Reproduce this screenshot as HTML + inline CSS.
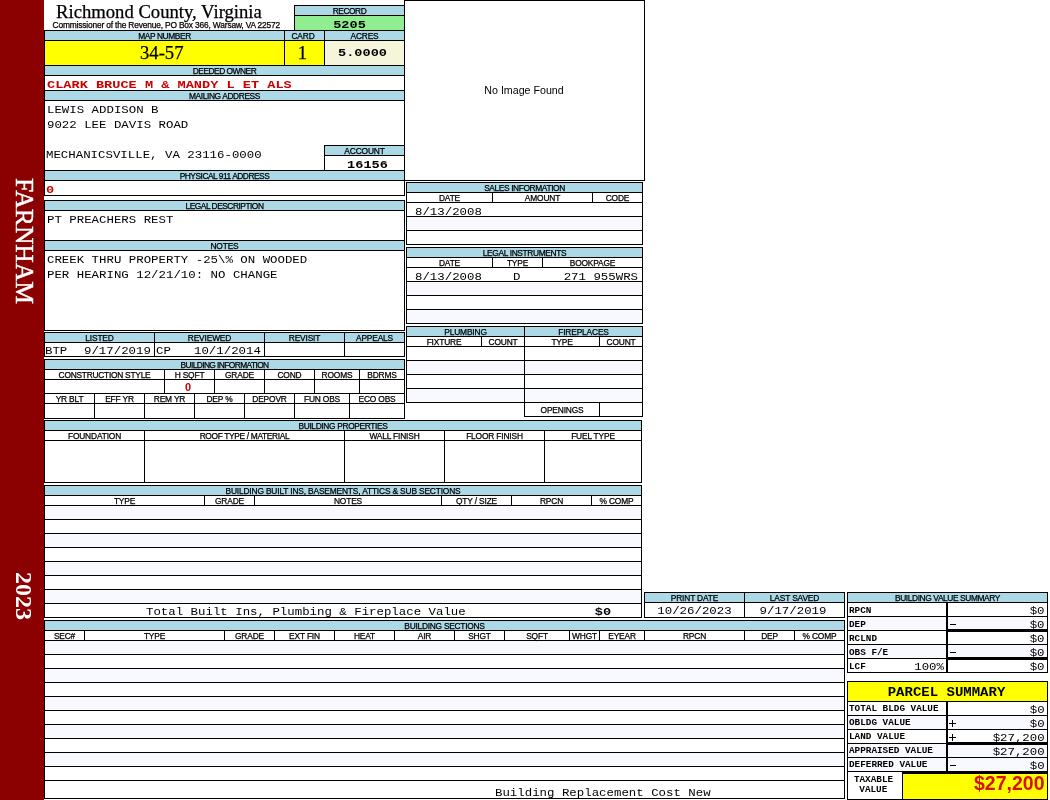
<!DOCTYPE html>
<html><head><meta charset="utf-8"><title>Property Record Card</title>
<style>
html,body{margin:0;padding:0;background:#fff;}
#p{position:relative;width:1050px;height:800px;overflow:hidden;background:#fff;font-family:"Liberation Sans",sans-serif;will-change:transform;}
.r{position:absolute;}
.t{position:absolute;white-space:pre;color:#000;line-height:1;}
.h{font:8.4px/9px "Liberation Sans",sans-serif;letter-spacing:-0.16px;-webkit-text-stroke:0.25px #000;}
.hs{letter-spacing:-0.165px;}
.m{font:12.4px/14px "Liberation Mono",monospace;transform:scaleY(.86);transform-origin:0 0;}
.mb{font:bold 13.6px/14px "Liberation Mono",monospace;transform:scaleY(.86);transform-origin:0 0;}
.sb{font:bold 11px/13px "Liberation Sans",sans-serif;}
.lb{font:bold 9.33px/12px "Liberation Mono",monospace;}
.s10{font:10.67px/14px "Liberation Sans",sans-serif;}
.title{font:18.67px/20px "Liberation Serif",serif;-webkit-text-stroke:0.25px #000;}
.big{font:18.67px/22px "Liberation Serif",serif;-webkit-text-stroke:0.25px #000;}
.ps{font:bold 14px/17px "Liberation Mono",monospace;transform:scaleY(.86);transform-origin:0 0;}
.tax{font:bold 19.5px/24px "Liberation Sans",sans-serif;}
.side{color:#fff;}
.rot{position:absolute;left:0;top:0;transform-origin:0 0;white-space:pre;font-family:"Liberation Serif",serif;}
.rot.f{font-size:25.6px;line-height:44px;-webkit-text-stroke:0.45px #fff;transform:translate(45.5px,0) rotate(90deg);}
.rot.y{font-size:24px;font-weight:bold;line-height:44px;transform:translate(46px,0) rotate(90deg);}
</style></head>
<body><div id="p">
<div class="r" style="left:0px;top:0px;width:44px;height:800px;background:#8B0000"></div>
<div class="r" style="left:295px;top:6px;width:109px;height:9px;background:#ADD8E6"></div>
<div class="r" style="left:295px;top:16px;width:109px;height:14px;background:#90EE90"></div>
<div class="r" style="left:294px;top:5px;width:111px;height:1px;background:#000"></div>
<div class="r" style="left:294px;top:15px;width:111px;height:1px;background:#000"></div>
<div class="r" style="left:294px;top:5px;width:1px;height:26px;background:#000"></div>
<div class="r" style="left:45px;top:31px;width:359px;height:9px;background:#ADD8E6"></div>
<div class="r" style="left:45px;top:41px;width:239px;height:24px;background:#FFFF00"></div>
<div class="r" style="left:285px;top:41px;width:39px;height:24px;background:#FFFF00"></div>
<div class="r" style="left:325px;top:41px;width:79px;height:24px;background:#F5F5DC"></div>
<div class="r" style="left:44px;top:30px;width:361px;height:1px;background:#000"></div>
<div class="r" style="left:44px;top:40px;width:361px;height:1px;background:#000"></div>
<div class="r" style="left:44px;top:65px;width:361px;height:1px;background:#000"></div>
<div class="r" style="left:284px;top:30px;width:1px;height:36px;background:#000"></div>
<div class="r" style="left:324px;top:30px;width:1px;height:36px;background:#000"></div>
<div class="r" style="left:45px;top:66px;width:359px;height:9px;background:#ADD8E6"></div>
<div class="r" style="left:44px;top:75px;width:361px;height:1px;background:#000"></div>
<div class="r" style="left:44px;top:90px;width:361px;height:1px;background:#000"></div>
<div class="r" style="left:45px;top:91px;width:359px;height:9px;background:#ADD8E6"></div>
<div class="r" style="left:44px;top:100px;width:361px;height:1px;background:#000"></div>
<div class="r" style="left:325px;top:146px;width:79px;height:9px;background:#ADD8E6"></div>
<div class="r" style="left:324px;top:145px;width:81px;height:1px;background:#000"></div>
<div class="r" style="left:324px;top:155px;width:81px;height:1px;background:#000"></div>
<div class="r" style="left:324px;top:145px;width:1px;height:26px;background:#000"></div>
<div class="r" style="left:44px;top:170px;width:361px;height:1px;background:#000"></div>
<div class="r" style="left:45px;top:171px;width:359px;height:9px;background:#ADD8E6"></div>
<div class="r" style="left:44px;top:180px;width:361px;height:1px;background:#000"></div>
<div class="r" style="left:44px;top:195px;width:361px;height:1px;background:#000"></div>
<div class="r" style="left:44px;top:200px;width:361px;height:1px;background:#000"></div>
<div class="r" style="left:45px;top:201px;width:359px;height:9px;background:#ADD8E6"></div>
<div class="r" style="left:44px;top:210px;width:361px;height:1px;background:#000"></div>
<div class="r" style="left:44px;top:240px;width:361px;height:1px;background:#000"></div>
<div class="r" style="left:45px;top:241px;width:359px;height:9px;background:#ADD8E6"></div>
<div class="r" style="left:44px;top:250px;width:361px;height:1px;background:#000"></div>
<div class="r" style="left:44px;top:330px;width:361px;height:1px;background:#000"></div>
<div class="r" style="left:44px;top:332px;width:361px;height:1px;background:#000"></div>
<div class="r" style="left:45px;top:333px;width:359px;height:9px;background:#ADD8E6"></div>
<div class="r" style="left:44px;top:342px;width:361px;height:1px;background:#000"></div>
<div class="r" style="left:44px;top:356px;width:361px;height:1px;background:#000"></div>
<div class="r" style="left:154px;top:332px;width:1px;height:25px;background:#000"></div>
<div class="r" style="left:264px;top:332px;width:1px;height:25px;background:#000"></div>
<div class="r" style="left:344px;top:332px;width:1px;height:25px;background:#000"></div>
<div class="r" style="left:44px;top:359px;width:361px;height:1px;background:#000"></div>
<div class="r" style="left:45px;top:360px;width:359px;height:9px;background:#ADD8E6"></div>
<div class="r" style="left:44px;top:369px;width:361px;height:1px;background:#000"></div>
<div class="r" style="left:44px;top:379px;width:361px;height:1px;background:#000"></div>
<div class="r" style="left:44px;top:393px;width:361px;height:1px;background:#000"></div>
<div class="r" style="left:44px;top:403px;width:361px;height:1px;background:#000"></div>
<div class="r" style="left:44px;top:418px;width:361px;height:1px;background:#000"></div>
<div class="r" style="left:164px;top:369px;width:1px;height:25px;background:#000"></div>
<div class="r" style="left:214px;top:369px;width:1px;height:25px;background:#000"></div>
<div class="r" style="left:264px;top:369px;width:1px;height:25px;background:#000"></div>
<div class="r" style="left:314px;top:369px;width:1px;height:25px;background:#000"></div>
<div class="r" style="left:359px;top:369px;width:1px;height:25px;background:#000"></div>
<div class="r" style="left:94px;top:393px;width:1px;height:26px;background:#000"></div>
<div class="r" style="left:144px;top:393px;width:1px;height:26px;background:#000"></div>
<div class="r" style="left:194px;top:393px;width:1px;height:26px;background:#000"></div>
<div class="r" style="left:244px;top:393px;width:1px;height:26px;background:#000"></div>
<div class="r" style="left:294px;top:393px;width:1px;height:26px;background:#000"></div>
<div class="r" style="left:349px;top:393px;width:1px;height:26px;background:#000"></div>
<div class="r" style="left:44px;top:30px;width:1px;height:166px;background:#000"></div>
<div class="r" style="left:404px;top:30px;width:1px;height:166px;background:#000"></div>
<div class="r" style="left:44px;top:200px;width:1px;height:131px;background:#000"></div>
<div class="r" style="left:404px;top:200px;width:1px;height:131px;background:#000"></div>
<div class="r" style="left:44px;top:332px;width:1px;height:25px;background:#000"></div>
<div class="r" style="left:404px;top:332px;width:1px;height:25px;background:#000"></div>
<div class="r" style="left:44px;top:359px;width:1px;height:60px;background:#000"></div>
<div class="r" style="left:404px;top:359px;width:1px;height:60px;background:#000"></div>
<div class="r" style="left:404px;top:0px;width:1px;height:31px;background:#000"></div>
<div class="r" style="left:404px;top:0px;width:241px;height:1px;background:#000"></div>
<div class="r" style="left:404px;top:180px;width:241px;height:1px;background:#000"></div>
<div class="r" style="left:644px;top:0px;width:1px;height:181px;background:#000"></div>
<div class="r" style="left:407px;top:183px;width:235px;height:9px;background:#ADD8E6"></div>
<div class="r" style="left:407px;top:217px;width:235px;height:13px;background:#F8F8FF"></div>
<div class="r" style="left:406px;top:182px;width:237px;height:1px;background:#000"></div>
<div class="r" style="left:406px;top:192px;width:237px;height:1px;background:#000"></div>
<div class="r" style="left:406px;top:202px;width:237px;height:1px;background:#000"></div>
<div class="r" style="left:406px;top:216px;width:237px;height:1px;background:#000"></div>
<div class="r" style="left:406px;top:230px;width:237px;height:1px;background:#000"></div>
<div class="r" style="left:406px;top:244px;width:237px;height:1px;background:#000"></div>
<div class="r" style="left:406px;top:182px;width:1px;height:63px;background:#000"></div>
<div class="r" style="left:642px;top:182px;width:1px;height:63px;background:#000"></div>
<div class="r" style="left:492px;top:192px;width:1px;height:11px;background:#000"></div>
<div class="r" style="left:592px;top:192px;width:1px;height:11px;background:#000"></div>
<div class="r" style="left:407px;top:248px;width:235px;height:9px;background:#ADD8E6"></div>
<div class="r" style="left:407px;top:282px;width:235px;height:13px;background:#F8F8FF"></div>
<div class="r" style="left:407px;top:310px;width:235px;height:13px;background:#F8F8FF"></div>
<div class="r" style="left:406px;top:247px;width:237px;height:1px;background:#000"></div>
<div class="r" style="left:406px;top:257px;width:237px;height:1px;background:#000"></div>
<div class="r" style="left:406px;top:267px;width:237px;height:1px;background:#000"></div>
<div class="r" style="left:406px;top:281px;width:237px;height:1px;background:#000"></div>
<div class="r" style="left:406px;top:295px;width:237px;height:1px;background:#000"></div>
<div class="r" style="left:406px;top:309px;width:237px;height:1px;background:#000"></div>
<div class="r" style="left:406px;top:323px;width:237px;height:1px;background:#000"></div>
<div class="r" style="left:406px;top:247px;width:1px;height:77px;background:#000"></div>
<div class="r" style="left:642px;top:247px;width:1px;height:77px;background:#000"></div>
<div class="r" style="left:492px;top:257px;width:1px;height:11px;background:#000"></div>
<div class="r" style="left:542px;top:257px;width:1px;height:11px;background:#000"></div>
<div class="r" style="left:407px;top:327px;width:235px;height:9px;background:#ADD8E6"></div>
<div class="r" style="left:407px;top:361px;width:235px;height:13px;background:#F8F8FF"></div>
<div class="r" style="left:407px;top:389px;width:235px;height:13px;background:#F8F8FF"></div>
<div class="r" style="left:406px;top:326px;width:237px;height:1px;background:#000"></div>
<div class="r" style="left:406px;top:336px;width:237px;height:1px;background:#000"></div>
<div class="r" style="left:406px;top:346px;width:237px;height:1px;background:#000"></div>
<div class="r" style="left:406px;top:360px;width:237px;height:1px;background:#000"></div>
<div class="r" style="left:406px;top:374px;width:237px;height:1px;background:#000"></div>
<div class="r" style="left:406px;top:388px;width:237px;height:1px;background:#000"></div>
<div class="r" style="left:406px;top:402px;width:237px;height:1px;background:#000"></div>
<div class="r" style="left:406px;top:326px;width:1px;height:77px;background:#000"></div>
<div class="r" style="left:642px;top:326px;width:1px;height:77px;background:#000"></div>
<div class="r" style="left:481px;top:336px;width:1px;height:11px;background:#000"></div>
<div class="r" style="left:524px;top:326px;width:1px;height:91px;background:#000"></div>
<div class="r" style="left:599px;top:336px;width:1px;height:11px;background:#000"></div>
<div class="r" style="left:599px;top:402px;width:1px;height:15px;background:#000"></div>
<div class="r" style="left:524px;top:416px;width:119px;height:1px;background:#000"></div>
<div class="r" style="left:642px;top:402px;width:1px;height:15px;background:#000"></div>
<div class="r" style="left:44px;top:420px;width:598px;height:1px;background:#000"></div>
<div class="r" style="left:45px;top:421px;width:596px;height:9px;background:#ADD8E6"></div>
<div class="r" style="left:44px;top:430px;width:598px;height:1px;background:#000"></div>
<div class="r" style="left:44px;top:440px;width:598px;height:1px;background:#000"></div>
<div class="r" style="left:44px;top:482px;width:598px;height:1px;background:#000"></div>
<div class="r" style="left:144px;top:430px;width:1px;height:53px;background:#000"></div>
<div class="r" style="left:344px;top:430px;width:1px;height:53px;background:#000"></div>
<div class="r" style="left:444px;top:430px;width:1px;height:53px;background:#000"></div>
<div class="r" style="left:544px;top:430px;width:1px;height:53px;background:#000"></div>
<div class="r" style="left:44px;top:420px;width:1px;height:63px;background:#000"></div>
<div class="r" style="left:641px;top:420px;width:1px;height:63px;background:#000"></div>
<div class="r" style="left:45px;top:486px;width:596px;height:9px;background:#ADD8E6"></div>
<div class="r" style="left:45px;top:506px;width:596px;height:13px;background:#F8F8FF"></div>
<div class="r" style="left:45px;top:534px;width:596px;height:13px;background:#F8F8FF"></div>
<div class="r" style="left:45px;top:562px;width:596px;height:13px;background:#F8F8FF"></div>
<div class="r" style="left:45px;top:590px;width:596px;height:13px;background:#F8F8FF"></div>
<div class="r" style="left:44px;top:485px;width:598px;height:1px;background:#000"></div>
<div class="r" style="left:44px;top:495px;width:598px;height:1px;background:#000"></div>
<div class="r" style="left:44px;top:505px;width:598px;height:1px;background:#000"></div>
<div class="r" style="left:44px;top:519px;width:598px;height:1px;background:#000"></div>
<div class="r" style="left:44px;top:533px;width:598px;height:1px;background:#000"></div>
<div class="r" style="left:44px;top:547px;width:598px;height:1px;background:#000"></div>
<div class="r" style="left:44px;top:561px;width:598px;height:1px;background:#000"></div>
<div class="r" style="left:44px;top:575px;width:598px;height:1px;background:#000"></div>
<div class="r" style="left:44px;top:589px;width:598px;height:1px;background:#000"></div>
<div class="r" style="left:44px;top:603px;width:598px;height:1px;background:#000"></div>
<div class="r" style="left:44px;top:617px;width:598px;height:1px;background:#000"></div>
<div class="r" style="left:44px;top:485px;width:1px;height:133px;background:#000"></div>
<div class="r" style="left:641px;top:485px;width:1px;height:133px;background:#000"></div>
<div class="r" style="left:204px;top:495px;width:1px;height:11px;background:#000"></div>
<div class="r" style="left:254px;top:495px;width:1px;height:11px;background:#000"></div>
<div class="r" style="left:441px;top:495px;width:1px;height:11px;background:#000"></div>
<div class="r" style="left:511px;top:495px;width:1px;height:11px;background:#000"></div>
<div class="r" style="left:591px;top:495px;width:1px;height:11px;background:#000"></div>
<div class="r" style="left:645px;top:593px;width:199px;height:9px;background:#ADD8E6"></div>
<div class="r" style="left:644px;top:592px;width:201px;height:1px;background:#000"></div>
<div class="r" style="left:644px;top:602px;width:201px;height:1px;background:#000"></div>
<div class="r" style="left:644px;top:617px;width:201px;height:1px;background:#000"></div>
<div class="r" style="left:644px;top:592px;width:1px;height:26px;background:#000"></div>
<div class="r" style="left:744px;top:592px;width:1px;height:26px;background:#000"></div>
<div class="r" style="left:844px;top:592px;width:1px;height:26px;background:#000"></div>
<div class="r" style="left:45px;top:621px;width:799px;height:9px;background:#ADD8E6"></div>
<div class="r" style="left:45px;top:641px;width:799px;height:13px;background:#F8F8FF"></div>
<div class="r" style="left:45px;top:669px;width:799px;height:13px;background:#F8F8FF"></div>
<div class="r" style="left:45px;top:697px;width:799px;height:13px;background:#F8F8FF"></div>
<div class="r" style="left:45px;top:725px;width:799px;height:13px;background:#F8F8FF"></div>
<div class="r" style="left:45px;top:753px;width:799px;height:13px;background:#F8F8FF"></div>
<div class="r" style="left:44px;top:620px;width:801px;height:1px;background:#000"></div>
<div class="r" style="left:44px;top:630px;width:801px;height:1px;background:#000"></div>
<div class="r" style="left:44px;top:640px;width:801px;height:1px;background:#000"></div>
<div class="r" style="left:44px;top:654px;width:801px;height:1px;background:#000"></div>
<div class="r" style="left:44px;top:668px;width:801px;height:1px;background:#000"></div>
<div class="r" style="left:44px;top:682px;width:801px;height:1px;background:#000"></div>
<div class="r" style="left:44px;top:696px;width:801px;height:1px;background:#000"></div>
<div class="r" style="left:44px;top:710px;width:801px;height:1px;background:#000"></div>
<div class="r" style="left:44px;top:724px;width:801px;height:1px;background:#000"></div>
<div class="r" style="left:44px;top:738px;width:801px;height:1px;background:#000"></div>
<div class="r" style="left:44px;top:752px;width:801px;height:1px;background:#000"></div>
<div class="r" style="left:44px;top:766px;width:801px;height:1px;background:#000"></div>
<div class="r" style="left:44px;top:780px;width:801px;height:1px;background:#000"></div>
<div class="r" style="left:44px;top:798px;width:801px;height:1px;background:#000"></div>
<div class="r" style="left:44px;top:620px;width:1px;height:179px;background:#000"></div>
<div class="r" style="left:844px;top:620px;width:1px;height:179px;background:#000"></div>
<div class="r" style="left:84px;top:630px;width:1px;height:11px;background:#000"></div>
<div class="r" style="left:224px;top:630px;width:1px;height:11px;background:#000"></div>
<div class="r" style="left:274px;top:630px;width:1px;height:11px;background:#000"></div>
<div class="r" style="left:334px;top:630px;width:1px;height:11px;background:#000"></div>
<div class="r" style="left:394px;top:630px;width:1px;height:11px;background:#000"></div>
<div class="r" style="left:454px;top:630px;width:1px;height:11px;background:#000"></div>
<div class="r" style="left:504px;top:630px;width:1px;height:11px;background:#000"></div>
<div class="r" style="left:569px;top:630px;width:1px;height:11px;background:#000"></div>
<div class="r" style="left:599px;top:630px;width:1px;height:11px;background:#000"></div>
<div class="r" style="left:644px;top:630px;width:1px;height:11px;background:#000"></div>
<div class="r" style="left:744px;top:630px;width:1px;height:11px;background:#000"></div>
<div class="r" style="left:794px;top:630px;width:1px;height:11px;background:#000"></div>
<div class="r" style="left:848px;top:593px;width:199px;height:9px;background:#ADD8E6"></div>
<div class="r" style="left:848px;top:617px;width:199px;height:13px;background:#F8F8FF"></div>
<div class="r" style="left:848px;top:645px;width:199px;height:13px;background:#F8F8FF"></div>
<div class="r" style="left:847px;top:592px;width:201px;height:1px;background:#000"></div>
<div class="r" style="left:847px;top:602px;width:201px;height:1px;background:#000"></div>
<div class="r" style="left:847px;top:616px;width:201px;height:1px;background:#000"></div>
<div class="r" style="left:847px;top:630px;width:201px;height:1px;background:#000"></div>
<div class="r" style="left:847px;top:644px;width:201px;height:1px;background:#000"></div>
<div class="r" style="left:847px;top:658px;width:201px;height:1px;background:#000"></div>
<div class="r" style="left:847px;top:672px;width:201px;height:1px;background:#000"></div>
<div class="r" style="left:947px;top:629px;width:101px;height:3px;background:#000"></div>
<div class="r" style="left:947px;top:657px;width:101px;height:3px;background:#000"></div>
<div class="r" style="left:847px;top:592px;width:1px;height:81px;background:#000"></div>
<div class="r" style="left:1047px;top:592px;width:1px;height:81px;background:#000"></div>
<div class="r" style="left:946px;top:602px;width:2px;height:71px;background:#000"></div>
<div class="r" style="left:848px;top:682px;width:199px;height:19px;background:#FFFF00"></div>
<div class="r" style="left:848px;top:716px;width:199px;height:13px;background:#F8F8FF"></div>
<div class="r" style="left:848px;top:744px;width:199px;height:13px;background:#F8F8FF"></div>
<div class="r" style="left:848px;top:758px;width:199px;height:13px;background:#F8F8FF"></div>
<div class="r" style="left:903px;top:774px;width:144px;height:25px;background:#FFFF00"></div>
<div class="r" style="left:847px;top:681px;width:201px;height:1px;background:#000"></div>
<div class="r" style="left:847px;top:701px;width:201px;height:1px;background:#000"></div>
<div class="r" style="left:847px;top:715px;width:201px;height:1px;background:#000"></div>
<div class="r" style="left:847px;top:729px;width:201px;height:1px;background:#000"></div>
<div class="r" style="left:847px;top:743px;width:201px;height:1px;background:#000"></div>
<div class="r" style="left:847px;top:757px;width:201px;height:1px;background:#000"></div>
<div class="r" style="left:847px;top:771px;width:201px;height:1px;background:#000"></div>
<div class="r" style="left:847px;top:799px;width:201px;height:1px;background:#000"></div>
<div class="r" style="left:947px;top:742px;width:101px;height:3px;background:#000"></div>
<div class="r" style="left:902px;top:771px;width:146px;height:3px;background:#000"></div>
<div class="r" style="left:902px;top:771px;width:1px;height:29px;background:#000"></div>
<div class="r" style="left:847px;top:681px;width:1px;height:119px;background:#000"></div>
<div class="r" style="left:1047px;top:681px;width:1px;height:119px;background:#000"></div>
<div class="r" style="left:946px;top:701px;width:2px;height:71px;background:#000"></div>
<div class="t title" style="left:56px;top:2px;">Richmond County, Virginia</div>
<div class="t h hs" style="left:52.5px;top:21px;">Commissioner of the Revenue, PO Box 366, Warsaw, VA 22572</div>
<div class="t h" style="left:295px;top:7px;width:109px;text-align:center;letter-spacing:-0.480px;">RECORD</div>
<div class="t mb" style="left:295px;top:18.5px;width:109px;text-align:center;">5205</div>
<div class="t h" style="left:45px;top:32px;width:239px;text-align:center;letter-spacing:-0.404px;">MAP NUMBER</div>
<div class="t h" style="left:282px;top:32px;width:42px;text-align:center;">CARD</div>
<div class="t h" style="left:325px;top:32px;width:79px;text-align:center;">ACRES</div>
<div class="t big" style="left:140px;top:42px;">34-57</div>
<div class="t big" style="left:283px;top:42px;width:39px;text-align:center;">1</div>
<div class="t mb" style="left:323px;top:47px;width:79px;text-align:center;">5.0000</div>
<div class="t h" style="left:45px;top:67px;width:359px;text-align:center;letter-spacing:-0.485px;">DEEDED OWNER</div>
<div class="t mb" style="left:47px;top:79px;color:#CC0000">CLARK BRUCE M &amp; MANDY L ET ALS</div>
<div class="t h" style="left:45px;top:92px;width:359px;text-align:center;letter-spacing:-0.388px;">MAILING ADDRESS</div>
<div class="t m" style="left:47px;top:104px;">LEWIS ADDISON B</div>
<div class="t m" style="left:47px;top:119px;">9022 LEE DAVIS ROAD</div>
<div class="t m" style="left:46px;top:149px;">MECHANICSVILLE, VA 23116-0000</div>
<div class="t h" style="left:325px;top:147px;width:79px;text-align:center;">ACCOUNT</div>
<div class="t mb" style="left:328px;top:159px;width:79px;text-align:center;">16156</div>
<div class="t h" style="left:45px;top:172px;width:359px;text-align:center;letter-spacing:-0.476px;">PHYSICAL 911 ADDRESS</div>
<div class="t mb" style="left:46px;top:184px;color:#CC0000">0</div>
<div class="t h" style="left:45px;top:202px;width:359px;text-align:center;letter-spacing:-0.489px;">LEGAL DESCRIPTION</div>
<div class="t m" style="left:47px;top:214px;">PT PREACHERS REST</div>
<div class="t h" style="left:45px;top:242px;width:359px;text-align:center;">NOTES</div>
<div class="t m" style="left:47px;top:254px;">CREEK THRU PROPERTY -25\% ON WOODED</div>
<div class="t m" style="left:47px;top:269px;">PER HEARING 12/21/10: NO CHANGE</div>
<div class="t h" style="left:45px;top:334px;width:109px;text-align:center;">LISTED</div>
<div class="t h" style="left:155px;top:334px;width:109px;text-align:center;">REVIEWED</div>
<div class="t h" style="left:265px;top:334px;width:79px;text-align:center;">REVISIT</div>
<div class="t h" style="left:345px;top:334px;width:59px;text-align:center;">APPEALS</div>
<div class="t m" style="left:45px;top:345px;">BTP</div>
<div class="t m" style="left:84px;top:345px;">9/17/2019</div>
<div class="t m" style="left:156px;top:345px;">CP</div>
<div class="t m" style="left:194px;top:345px;">10/1/2014</div>
<div class="t h" style="left:45px;top:361px;width:359px;text-align:center;letter-spacing:-0.590px;">BUILDING INFORMATION</div>
<div class="t h" style="left:45px;top:371px;width:119px;text-align:center;letter-spacing:-0.253px;">CONSTRUCTION STYLE</div>
<div class="t h" style="left:165px;top:371px;width:49px;text-align:center;">H SQFT</div>
<div class="t h" style="left:215px;top:371px;width:49px;text-align:center;">GRADE</div>
<div class="t h" style="left:265px;top:371px;width:49px;text-align:center;">COND</div>
<div class="t h" style="left:315px;top:371px;width:44px;text-align:center;">ROOMS</div>
<div class="t h" style="left:360px;top:371px;width:44px;text-align:center;">BDRMS</div>
<div class="t sb" style="left:163.5px;top:381px;width:49px;text-align:center;color:#CC0000">0</div>
<div class="t h" style="left:45px;top:395px;width:49px;text-align:center;">YR BLT</div>
<div class="t h" style="left:95px;top:395px;width:49px;text-align:center;">EFF YR</div>
<div class="t h" style="left:145px;top:395px;width:49px;text-align:center;">REM YR</div>
<div class="t h" style="left:195px;top:395px;width:49px;text-align:center;">DEP %</div>
<div class="t h" style="left:245px;top:395px;width:49px;text-align:center;">DEPOVR</div>
<div class="t h" style="left:295px;top:395px;width:54px;text-align:center;">FUN OBS</div>
<div class="t h" style="left:350px;top:395px;width:54px;text-align:center;">ECO OBS</div>
<div class="t s10" style="left:404px;top:83px;width:240px;text-align:center;">No Image Found</div>
<div class="t h" style="left:407px;top:184px;width:235px;text-align:center;letter-spacing:-0.388px;">SALES INFORMATION</div>
<div class="t h" style="left:407px;top:194px;width:85px;text-align:center;">DATE</div>
<div class="t h" style="left:493px;top:194px;width:99px;text-align:center;">AMOUNT</div>
<div class="t h" style="left:593px;top:194px;width:49px;text-align:center;">CODE</div>
<div class="t m" style="left:415px;top:206px;">8/13/2008</div>
<div class="t h" style="left:407px;top:249px;width:235px;text-align:center;letter-spacing:-0.361px;">LEGAL INSTRUMENTS</div>
<div class="t h" style="left:407px;top:259px;width:85px;text-align:center;">DATE</div>
<div class="t h" style="left:493px;top:259px;width:49px;text-align:center;">TYPE</div>
<div class="t h" style="left:543px;top:259px;width:99px;text-align:center;">BOOKPAGE</div>
<div class="t m" style="left:415px;top:271px;">8/13/2008</div>
<div class="t m" style="left:513px;top:271px;">D</div>
<div class="t m" style="left:540px;top:271px;width:98px;text-align:right;">271 955WRS</div>
<div class="t h" style="left:407px;top:328px;width:117px;text-align:center;">PLUMBING</div>
<div class="t h" style="left:525px;top:328px;width:117px;text-align:center;">FIREPLACES</div>
<div class="t h" style="left:407px;top:338px;width:74px;text-align:center;">FIXTURE</div>
<div class="t h" style="left:482px;top:338px;width:42px;text-align:center;">COUNT</div>
<div class="t h" style="left:525px;top:338px;width:74px;text-align:center;">TYPE</div>
<div class="t h" style="left:600px;top:338px;width:42px;text-align:center;">COUNT</div>
<div class="t h" style="left:525px;top:406px;width:74px;text-align:center;">OPENINGS</div>
<div class="t h" style="left:45px;top:422px;width:596px;text-align:center;letter-spacing:-0.347px;">BUILDING PROPERTIES</div>
<div class="t h" style="left:45px;top:432px;width:99px;text-align:center;">FOUNDATION</div>
<div class="t h" style="left:145px;top:432px;width:199px;text-align:center;letter-spacing:-0.339px;">ROOF TYPE / MATERIAL</div>
<div class="t h" style="left:345px;top:432px;width:99px;text-align:center;">WALL FINISH</div>
<div class="t h" style="left:445px;top:432px;width:99px;text-align:center;">FLOOR FINISH</div>
<div class="t h" style="left:545px;top:432px;width:96px;text-align:center;">FUEL TYPE</div>
<div class="t h" style="left:45px;top:487px;width:596px;text-align:center;">BUILDING BUILT INS, BASEMENTS, ATTICS &amp; SUB SECTIONS</div>
<div class="t h" style="left:45px;top:497px;width:159px;text-align:center;">TYPE</div>
<div class="t h" style="left:205px;top:497px;width:49px;text-align:center;">GRADE</div>
<div class="t h" style="left:255px;top:497px;width:186px;text-align:center;">NOTES</div>
<div class="t h" style="left:442px;top:497px;width:69px;text-align:center;">QTY / SIZE</div>
<div class="t h" style="left:512px;top:497px;width:79px;text-align:center;">RPCN</div>
<div class="t h" style="left:592px;top:497px;width:49px;text-align:center;">% COMP</div>
<div class="t m" style="left:146px;top:606px;">Total Built Ins, Plumbing &amp; Fireplace Value</div>
<div class="t mb" style="left:575px;top:606px;width:56px;text-align:center;">$0</div>
<div class="t h" style="left:645px;top:594px;width:99px;text-align:center;">PRINT DATE</div>
<div class="t h" style="left:745px;top:594px;width:99px;text-align:center;">LAST SAVED</div>
<div class="t m" style="left:645px;top:605px;width:99px;text-align:center;">10/26/2023</div>
<div class="t m" style="left:743.5px;top:605px;width:99px;text-align:center;">9/17/2019</div>
<div class="t h" style="left:45px;top:622px;width:799px;text-align:center;letter-spacing:-0.259px;">BUILDING SECTIONS</div>
<div class="t h" style="left:45px;top:632px;width:39px;text-align:center;">SEC#</div>
<div class="t h" style="left:85px;top:632px;width:139px;text-align:center;">TYPE</div>
<div class="t h" style="left:225px;top:632px;width:49px;text-align:center;">GRADE</div>
<div class="t h" style="left:275px;top:632px;width:59px;text-align:center;">EXT FIN</div>
<div class="t h" style="left:335px;top:632px;width:59px;text-align:center;">HEAT</div>
<div class="t h" style="left:395px;top:632px;width:59px;text-align:center;">AIR</div>
<div class="t h" style="left:455px;top:632px;width:49px;text-align:center;">SHGT</div>
<div class="t h" style="left:505px;top:632px;width:64px;text-align:center;">SQFT</div>
<div class="t h" style="left:570px;top:632px;width:29px;text-align:center;">WHGT</div>
<div class="t h" style="left:600px;top:632px;width:44px;text-align:center;">EYEAR</div>
<div class="t h" style="left:645px;top:632px;width:99px;text-align:center;">RPCN</div>
<div class="t h" style="left:745px;top:632px;width:49px;text-align:center;">DEP</div>
<div class="t h" style="left:795px;top:632px;width:49px;text-align:center;">% COMP</div>
<div class="t m" style="left:495px;top:786.5px;">Building Replacement Cost New</div>
<div class="t h" style="left:848px;top:594px;width:199px;text-align:center;letter-spacing:-0.396px;">BUILDING VALUE SUMMARY</div>
<div class="t lb" style="left:849px;top:605px;">RPCN</div>
<div class="t m" style="left:948px;top:605px;width:96.5px;text-align:right;">$0</div>
<div class="t lb" style="left:849px;top:619px;">DEP</div>
<div class="r" style="left:950px;top:624px;width:6px;height:1px;background:#000"></div>
<div class="t m" style="left:948px;top:619px;width:96.5px;text-align:right;">$0</div>
<div class="t lb" style="left:849px;top:633px;">RCLND</div>
<div class="t m" style="left:948px;top:633px;width:96.5px;text-align:right;">$0</div>
<div class="t lb" style="left:849px;top:647px;">OBS F/E</div>
<div class="r" style="left:950px;top:652px;width:6px;height:1px;background:#000"></div>
<div class="t m" style="left:948px;top:647px;width:96.5px;text-align:right;">$0</div>
<div class="t lb" style="left:849px;top:661px;">LCF</div>
<div class="t m" style="left:948px;top:661px;width:96.5px;text-align:right;">$0</div>
<div class="t m" style="left:899px;top:661px;width:45px;text-align:right;">100%</div>
<div class="t ps" style="left:847px;top:685.5px;width:199px;text-align:center;">PARCEL SUMMARY</div>
<div class="t lb" style="left:849px;top:703px;">TOTAL BLDG VALUE</div>
<div class="t m" style="left:948px;top:704px;width:96.7px;text-align:right;">$0</div>
<div class="t lb" style="left:849px;top:717px;">OBLDG VALUE</div>
<div class="r" style="left:949px;top:723px;width:7px;height:1px;background:#000"></div>
<div class="r" style="left:952px;top:720px;width:1px;height:7px;background:#000"></div>
<div class="t m" style="left:948px;top:718px;width:96.7px;text-align:right;">$0</div>
<div class="t lb" style="left:849px;top:731px;">LAND VALUE</div>
<div class="r" style="left:949px;top:737px;width:7px;height:1px;background:#000"></div>
<div class="r" style="left:952px;top:734px;width:1px;height:7px;background:#000"></div>
<div class="t m" style="left:948px;top:732px;width:96.7px;text-align:right;">$27,200</div>
<div class="t lb" style="left:849px;top:745px;">APPRAISED VALUE</div>
<div class="t m" style="left:948px;top:746px;width:96.7px;text-align:right;">$27,200</div>
<div class="t lb" style="left:849px;top:759px;">DEFERRED VALUE</div>
<div class="r" style="left:950px;top:765px;width:6px;height:1px;background:#000"></div>
<div class="t m" style="left:948px;top:760px;width:96.7px;text-align:right;">$0</div>
<div class="t lb" style="left:848px;top:774px;width:51px;text-align:center;">TAXABLE</div>
<div class="t lb" style="left:848px;top:784px;width:50.6px;text-align:center;">VALUE</div>
<div class="t tax" style="left:903px;top:771px;width:141.5px;text-align:right;color:#D81000">$27,200</div>
<div class="t side" style="left:0;top:178px;width:44px;height:124px;"><span class="rot f">FARNHAM</span></div>
<div class="t side" style="left:0;top:572px;width:44px;height:48px;"><span class="rot y">2023</span></div>
</div></body></html>
